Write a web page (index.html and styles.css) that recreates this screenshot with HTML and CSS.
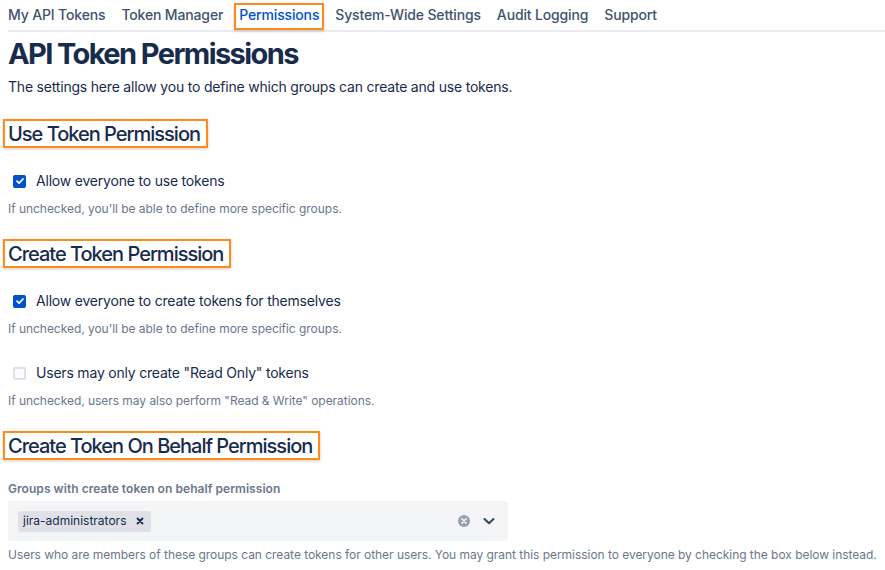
FILE: index.html
```html
<!DOCTYPE html>
<html lang="en">
<head>
<meta charset="utf-8">
<title>API Token Permissions</title>
<link rel="stylesheet" href="styles.css">
</head>
<body>
<div class="page">
  <nav class="tabs">
    <a class="tab">My API Tokens</a>
    <a class="tab">Token Manager</a>
    <a class="tab active"><span class="mark-tab">Permissions</span></a>
    <a class="tab">System-Wide Settings</a>
    <a class="tab">Audit Logging</a>
    <a class="tab">Support</a>
  </nav>

  <h1 class="title">API Token Permissions</h1>
  <p class="intro">The settings here allow you to define which groups can create and use tokens.</p>

  <section class="section">
    <h2 class="section-title"><span class="mark">Use Token Permission</span></h2>
    <label class="check"><span class="box checked"><svg viewBox="0 0 12 12" width="12" height="12"><path d="M3 6.2 5.1 8.2 9 4" fill="none" stroke="#fff" stroke-width="1.8" stroke-linecap="round" stroke-linejoin="round"/></svg></span>Allow everyone to use tokens</label>
    <p class="help">If unchecked, you'll be able to define more specific groups.</p>
  </section>

  <section class="section">
    <h2 class="section-title"><span class="mark">Create Token Permission</span></h2>
    <label class="check"><span class="box checked"><svg viewBox="0 0 12 12" width="12" height="12"><path d="M3 6.2 5.1 8.2 9 4" fill="none" stroke="#fff" stroke-width="1.8" stroke-linecap="round" stroke-linejoin="round"/></svg></span>Allow everyone to create tokens for themselves</label>
    <p class="help">If unchecked, you'll be able to define more specific groups.</p>
    <label class="check check-second"><span class="box"></span>Users may only create "Read Only" tokens</label>
    <p class="help">If unchecked, users may also perform "Read &amp; Write" operations.</p>
  </section>

  <section class="section">
    <h2 class="section-title"><span class="mark">Create Token On Behalf Permission</span></h2>
    <div class="field-label">Groups with create token on behalf permission</div>
    <div class="select">
      <div class="tags">
        <span class="tag">jira-administrators<svg class="tag-x" viewBox="0 0 8 8" width="8" height="8"><path d="M1.5 1.5 6.5 6.5M6.5 1.5 1.5 6.5" stroke="#172B4D" stroke-width="1.8" stroke-linecap="round"/></svg></span>
      </div>
      <div class="indicators">
        <svg class="clear" viewBox="0 0 14 14" width="14" height="14"><circle cx="7" cy="7" r="6" fill="#97A0AF"/><path d="M4.9 4.9 9.1 9.1M9.1 4.9 4.9 9.1" stroke="#F4F5F7" stroke-width="1.6" stroke-linecap="round"/></svg>
        <svg class="chev" viewBox="0 0 14 14" width="14" height="14"><path d="M2.5 5 7 9.3 11.5 5" fill="none" stroke="#344563" stroke-width="2" stroke-linecap="round" stroke-linejoin="round"/></svg>
      </div>
    </div>
    <p class="help help-last">Users who are members of these groups can create tokens for other users. You may grant this permission to everyone by checking the box below instead.</p>
  </section>
</div>
</body>
</html>
```
FILE: styles.css
```css
* { box-sizing: border-box; }
html, body { margin: 0; padding: 0; background: #fff; }
body {
  font-family: Inter, "Noto Sans", "Liberation Sans", sans-serif;
  color: #172B4D;
  font-size: 14px;
  line-height: 20px;
  letter-spacing: -0.2px;
}
.page { padding: 0 0 0 8px; width: 885px; }

.tabs {
  display: flex;
  gap: 16px;
  border-bottom: 2px solid #EBECF0;
  height: 32px;
  padding-top: 5px;
}
.tab {
  color: #42526E;
  font-weight: 500;
  font-size: 14px;
  line-height: 20px;
  white-space: nowrap;
  letter-spacing: -0.15px;
}
.tab.active { color: #0052CC; }
.mark-tab {
  display: inline-block;
  margin: -2px -5px 0;
  padding: 0 3px 3px;
  border: 2px solid #FF8B1A;
  box-shadow: 0 1px 3px rgba(0,0,0,0.2);
}

.title {
  font-size: 29px;
  line-height: 32px;
  font-weight: 700;
  margin: 6px 0 0;
  letter-spacing: -0.055em;
}
.intro { margin: 7px 0 0; }

.section-title {
  margin: 22px 0 0 -5px;
  font-size: 20px;
  line-height: 24px;
  font-weight: 500;
  letter-spacing: -0.05em;
}
.mark {
  display: inline-block;
  border: 2px solid #FF8B1A;
  padding: 1px 6px 0 3px;
  box-shadow: 0 1px 3px rgba(0,0,0,0.2);
}

.check {
  display: flex;
  align-items: center;
  gap: 10px;
  margin: 23px 0 0 5px;
}
.check-second { margin-top: 26px; }
.box {
  width: 13px; height: 13px;
  border-radius: 2px;
  border: 2px solid #DFE1E6;
  background: #FAFBFC;
  display: flex; align-items: center; justify-content: center;
  flex: none;
}
.box.checked { background: #0052CC; border: none; }

.help {
  margin: 10px 0 0;
  font-size: 12px;
  line-height: 16px;
  color: #6B778C;
  letter-spacing: -0.04px;
}

.field-label {
  margin-top: 21px;
  font-size: 12px;
  line-height: 16px;
  font-weight: 600;
  color: #6B778C;
  letter-spacing: 0.05px;
}
.select {
  margin-top: 4px;
  width: 500px;
  height: 40px;
  background: #F4F5F7;
  border-radius: 3px;
  display: flex;
  align-items: center;
  justify-content: space-between;
  padding: 0 12px 0 10px;
}
.tag {
  display: inline-flex;
  align-items: center;
  gap: 10px;
  background: #DFE1E6;
  border-radius: 3px;
  height: 21px;
  padding: 0 7px 0 5px;
  font-size: 12px;
  color: #172B4D;
  letter-spacing: 0;
}
.indicators { display: flex; align-items: center; gap: 11px; }
.help-last { margin-top: 6px; }
```
